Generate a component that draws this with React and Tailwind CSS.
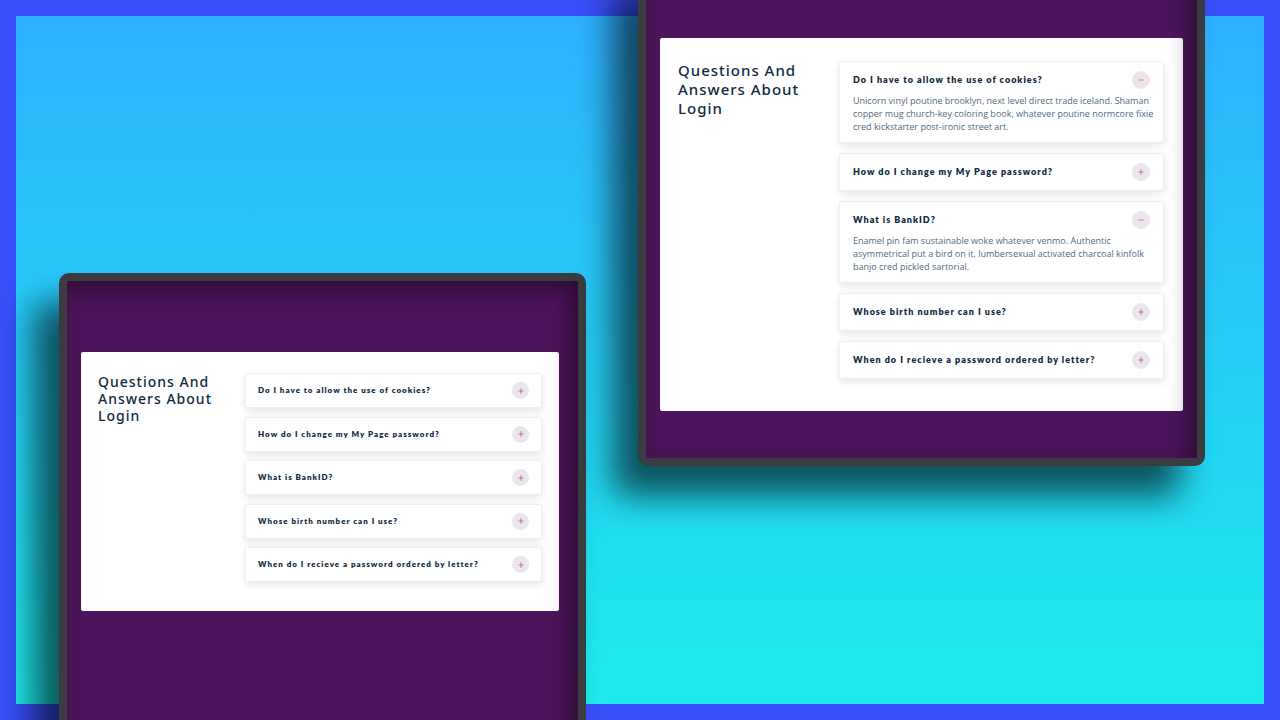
import { useState } from "react";
import { AiOutlineMinus, AiOutlinePlus } from "react-icons/ai";

const QUESTIONS = [
  {
    id: 1,
    title: "Do I have to allow the use of cookies?",
    info: "Unicorn vinyl poutine brooklyn, next level direct trade iceland. Shaman copper mug church-key coloring book, whatever poutine normcore fixie cred kickstarter post-ironic street art.",
  },
  {
    id: 2,
    title: "How do I change my My Page password?",
    info: "Vexillologist man bun intelligentsia four loko, art party bushwick.",
  },
  {
    id: 3,
    title: "What is BankID?",
    info: "Enamel pin fam sustainable woke whatever venmo. Authentic asymmetrical put a bird on it, lumbersexual activated charcoal kinfolk banjo cred pickled sartorial.",
  },
  {
    id: 4,
    title: "Whose birth number can I use?",
    info: "Edison bulb direct trade gentrify beard lo-fi seitan sustainable roof party franzen.",
  },
  {
    id: 5,
    title: "When do I recieve a password ordered by letter?",
    info: "Kogi ramps tumeric poutine, man bun mustache gochujang.",
  },
];

const SIZES = {
  small: {
    card: "px-[17px] pt-[21px] pb-[29px]",
    heading: "w-[147px] text-[14px] leading-[17px]",
    list: "min-h-[209px] justify-between",
    item: "px-3 py-2",
    title: "text-[8px] leading-[17px]",
    toggle: "size-[17px]",
    icon: "size-2",
    info: "text-[8px] leading-3",
  },
  large: {
    card: "pl-[18px] pr-[19px] pt-[23px] pb-8",
    heading: "w-[161px] text-[15px] leading-[19px]",
    list: "gap-[10px]",
    item: "px-[13px] py-[9px]",
    title: "text-[9px] leading-[18px]",
    toggle: "size-[18px]",
    icon: "size-2",
    info: "text-[9px] leading-[13px]",
  },
};

function Question({ title, info, styles, defaultOpen }) {
  const [open, setOpen] = useState(defaultOpen);
  return (
    <article
      className={`rounded-[2px] border border-[#efeff1] bg-white shadow-[0_3px_8px_rgba(0,0,0,0.1)] ${styles.item}`}
    >
      <header className="flex items-center justify-between">
        <h4 className={`font-['Lato','Open_Sans',sans-serif] font-extrabold tracking-[1px] text-[#102a42] ${styles.title}`}>{title}</h4>
        <button
          type="button"
          aria-label={title}
          aria-expanded={open}
          onClick={() => setOpen(!open)}
          className={`flex shrink-0 items-center justify-center rounded-full bg-[#eae6eb] text-[#b4235a] ${styles.toggle}`}
        >
          {open ? <AiOutlineMinus className={styles.icon} /> : <AiOutlinePlus className={styles.icon} />}
        </button>
      </header>
      {open && (
        <p className={`mt-[5px] -mr-2 text-[#526b80] ${styles.info}`}>{info}</p>
      )}
    </article>
  );
}

function Faq({ size, openIds }) {
  const styles = SIZES[size];
  return (
    <section className={`flex rounded-[2px] bg-white ${styles.card}`}>
      <h3
        className={`shrink-0 pr-4 font-['Noto_Sans','Open_Sans',sans-serif] font-medium tracking-[1px] text-[#102a42] ${styles.heading}`}
      >
        Questions And Answers About Login
      </h3>
      <div className={`flex min-w-0 flex-1 flex-col ${styles.list}`}>
        {QUESTIONS.map((q) => (
          <Question
            key={q.id}
            title={q.title}
            info={q.info}
            styles={styles}
            defaultOpen={openIds.includes(q.id)}
          />
        ))}
      </div>
    </section>
  );
}

function Screen({ className, children }) {
  return (
    <div
      className={`relative rounded-[10px] border-8 border-[#3b3c41] bg-[#4c145a] shadow-[-25px_30px_34px_rgba(0,0,0,0.62)] after:pointer-events-none after:absolute after:inset-0 after:shadow-[inset_-8px_8px_20px_rgba(0,0,0,0.4)] ${className}`}
    >
      {children}
    </div>
  );
}

export default function App() {
  return (
    <div className="h-screen overflow-hidden font-['Open_Sans','Noto_Sans',sans-serif]">
      <main className="grid h-full grid-cols-[527fr_567fr] grid-rows-1 gap-[52px] border-16 border-[#384ff9] bg-linear-to-b from-[#2eb1ff] to-[#1eebeb] pr-[59px] pl-[43px]">
        <Screen className="mt-[257px] -mb-10 pt-[71px] pr-[19px] pl-[14px]">
          <Faq size="small" openIds={[]} />
        </Screen>
        <Screen className="-mt-14 self-start px-[14px] pt-[70px] pb-[47px]">
          <Faq size="large" openIds={[1, 3]} />
        </Screen>
      </main>
    </div>
  );
}
